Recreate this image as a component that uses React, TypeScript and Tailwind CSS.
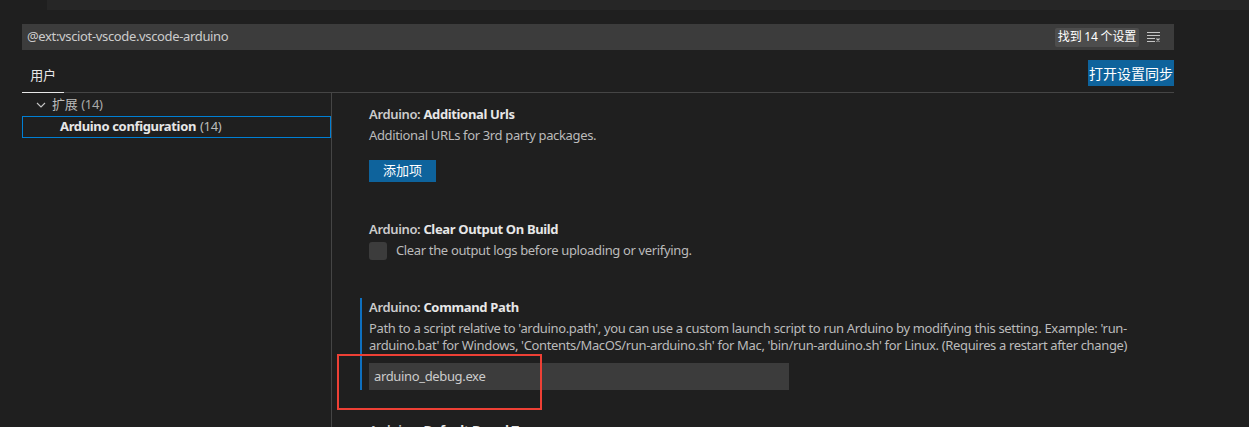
import React from "react";

const font = { fontFamily: '"Segoe UI", "Noto Sans", "Noto Sans CJK SC", sans-serif' };

function FilterIcon() {
  return (
    <svg width="16" height="16" viewBox="0 0 16 16" fill="none">
      <path d="M1 3.5h13M1 6.5h13M1 9.5h8M1 12.5h8" stroke="#c5c5c5" strokeWidth="1" />
      <path d="M10.5 9.5l3 3M13.5 9.5l-3 3" stroke="#c5c5c5" strokeWidth="1.2" />
    </svg>
  );
}

function Chevron() {
  return (
    <svg width="10" height="10" viewBox="0 0 10 10" fill="none">
      <path d="M1 3l4 4 4-4" stroke="#c5c5c5" strokeWidth="1.1" />
    </svg>
  );
}

export default function App() {
  return (
    <div
      className="relative w-[1249px] h-[427px] overflow-hidden bg-[#1f1f1f] text-[13px] text-[#cccccc] tracking-[-0.35px]"
      style={font}
    >
      <div className="flex h-[10px]">
        <div className="w-[47px] bg-[#1f1f1f]" />
        <div className="flex-1 bg-[#262626]" />
      </div>

      <div className="ml-[22px] w-[1152px]">
        {/* search */}
        <div className="mt-[14px] h-[26px] bg-[#3c3c3c] flex items-center pl-[5px] pr-[12px]">
          <span className="flex-1 text-[13px] text-[#cccccc]">@ext:vsciot-vscode.vscode-arduino</span>
          <span className="h-[19px] px-[3px] flex items-center rounded-[2px] bg-[#4d4d4d] text-[12px] text-[#ffffff] tracking-[-0.2px]">
            找到 14 个设置
          </span>
          <span className="ml-[7px] flex items-center">
            <FilterIcon />
          </span>
        </div>

        {/* tabs */}
        <div className="h-[43px] flex items-end justify-between border-b border-[#454545]">
          <div className="w-[42px] h-[42px] flex items-center justify-center border-b border-[#e7e7e7] text-[#e7e7e7] text-[13px] pt-[9px] -mb-px">
            用户
          </div>
          <div className="self-start mt-[10px] h-[26px] w-[86px] bg-[#0e639c] text-white text-[14px] tracking-normal flex items-center justify-center">
            打开设置同步
          </div>
        </div>

        {/* body */}
        <div className="flex">
          <div className="w-[309px] shrink-0 pt-px">
            <div className="h-[22px] flex items-center pl-[14px] text-[#bbbbbb]">
              <Chevron />
              <span className="ml-[6px]">扩展</span>
              <span className="ml-[4px] text-[#a9a9a9]">(14)</span>
            </div>
            <div className="h-[22px] flex items-center pl-[37px] border border-[#007fd4]">
              <span className="font-bold text-[#e7e7e7]">Arduino configuration</span>
              <span className="ml-[4px] text-[#bbbbbb]">(14)</span>
            </div>
          </div>
          <div className="w-px bg-[#454545] h-[340px]" />

          <div className="pl-[37px] flex-1">
            {/* Additional Urls */}
            <div className="pt-[12px]">
              <div className="leading-[18px] font-semibold text-[#cccccc]">
                Arduino: <span className="font-bold text-[#e7e7e7]">Additional Urls</span>
              </div>
              <div className="mt-[3px] leading-[18px] text-[#bbbbbb]">Additional URLs for 3rd party packages.</div>
              <div className="mt-[16px] h-[22px] w-[67px] bg-[#0e639c] text-white flex items-center justify-center text-[13px] tracking-normal">
                添加项
              </div>
            </div>

            {/* Clear Output */}
            <div className="mt-[38px]">
              <div className="leading-[18px] font-semibold text-[#cccccc]">
                Arduino: <span className="font-bold text-[#e7e7e7]">Clear Output On Build</span>
              </div>
              <div className="mt-[4px] flex items-center h-[18px]">
                <div className="w-[18px] h-[18px] rounded-[3px] bg-[#3c3c3c]" />
                <span className="ml-[9px] text-[#bbbbbb]">Clear the output logs before uploading or verifying.</span>
              </div>
            </div>

            {/* Command Path */}
            <div className="mt-[40px] -ml-[9px] pl-[7px] border-l-2 border-[#0e70c0]">
              <div className="-mt-[2px] leading-[18px] font-semibold text-[#cccccc]">
                Arduino: <span className="font-bold text-[#e7e7e7]">Command Path</span>
              </div>
              <div className="mt-[4px] leading-[17px] text-[#bbbbbb] whitespace-nowrap">
                <div>
                  Path to a script relative to 'arduino.path', you can use a custom launch script to run Arduino by modifying this setting. Example: 'run-
                </div>
                <div>
                  arduino.bat' for Windows, 'Contents/MacOS/run-arduino.sh' for Mac, 'bin/run-arduino.sh' for Linux. (Requires a restart after change)
                </div>
              </div>
              <div className="mt-[9px] w-[420px] h-[27px] bg-[#3c3c3c] flex items-center pl-[5px] text-[#cccccc]">
                arduino_debug.exe
              </div>
            </div>

            {/* Default Board Type */}
            <div className="mt-[31px] leading-[18px] font-semibold text-[#cccccc]">
              Arduino: <span className="font-bold text-[#e7e7e7]">Default Board Type</span>
            </div>
          </div>
        </div>
      </div>

      {/* red highlight */}
      <div className="absolute left-[337px] top-[354px] w-[205px] h-[56px] border-2 border-[#ee4035]" />
    </div>
  );
}
